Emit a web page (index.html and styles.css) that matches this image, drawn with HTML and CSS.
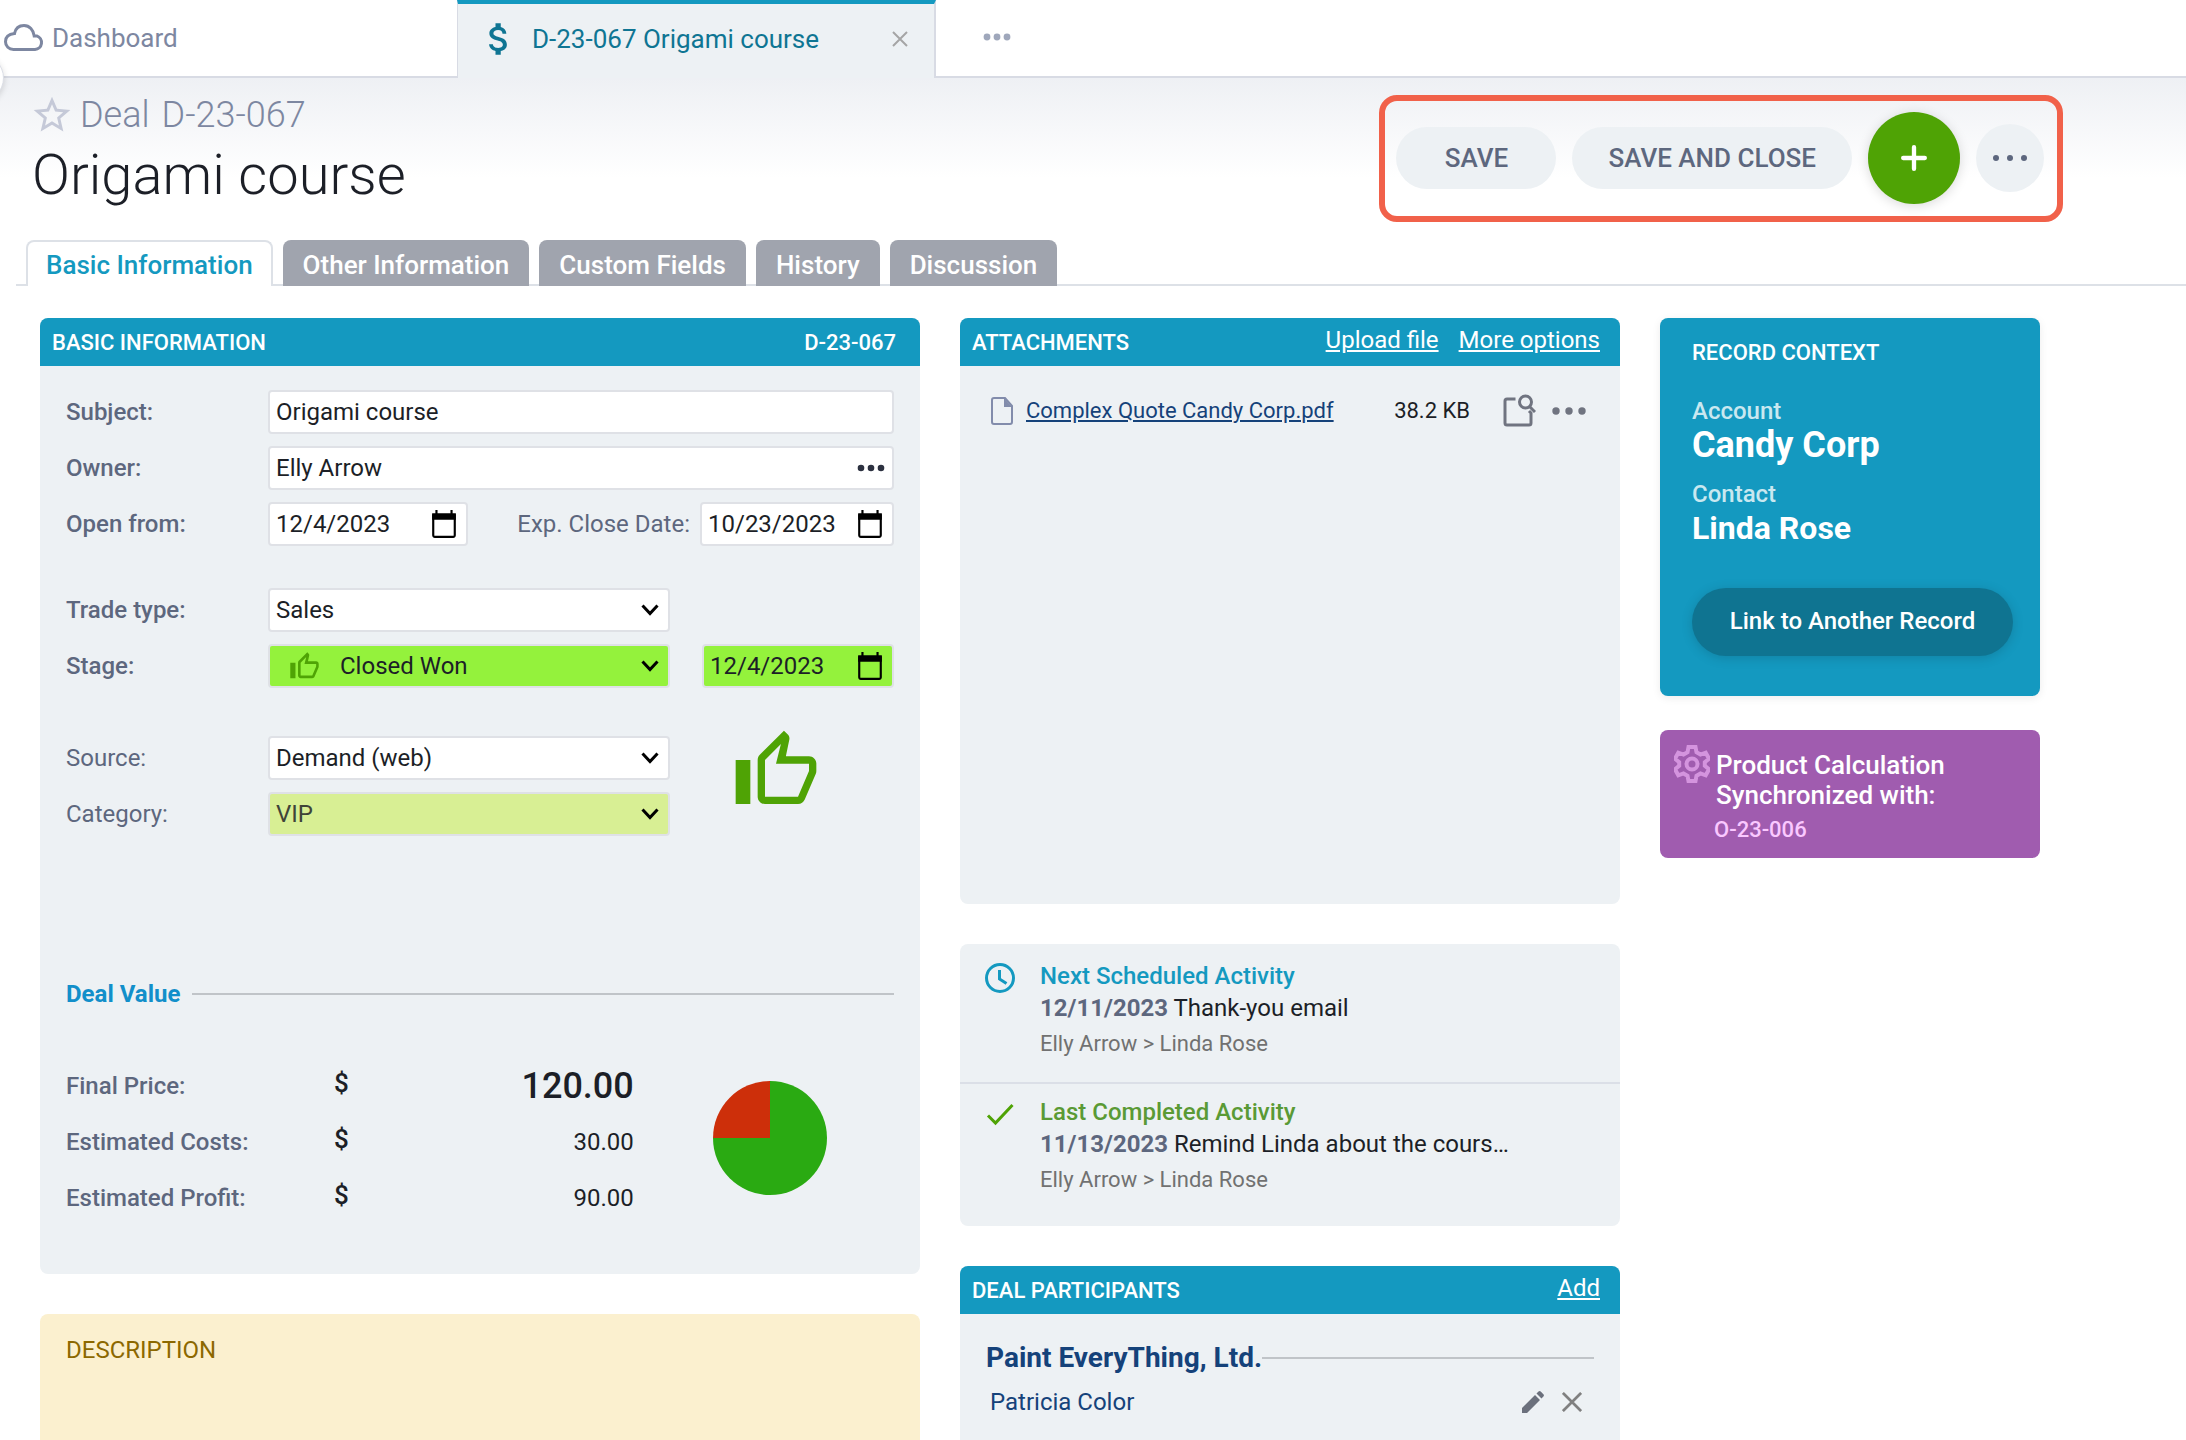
FILE: index.html
```html
<!DOCTYPE html>
<html lang="en">

<head>
    <meta charset="UTF-8">
    <meta name="viewport" content="width=device-width, initial-scale=1.0">
    <title>D-23-067 Origami course</title>
    <link rel="stylesheet" href="styles.css">
</head>

<body>
    <nav class="windowTabs">
        <a class="windowTab home" href="#">
            <svg class="cloud" viewBox="0 0 40 28" aria-hidden="true">
                <path d="M9.500 25.500h21.500a7 7 0 0 0 1.800-13.600h-2.600C29.500 6 25.500 1.500 20 1.500c-5 0-8.500 3.200-9.500 8-5.500.5-9 3.500-9 8.200 0 4.500 3.400 7.800 8 7.800z" />
            </svg>
            Dashboard
        </a>
        <div class="windowTab active">
            <svg class="dollar" viewBox="0 0 24 24" aria-hidden="true">
                <path d="M11.8 10.9c-2.27-.59-3-1.2-3-2.15 0-1.09 1.01-1.85 2.7-1.85 1.78 0 2.44.85 2.5 2.1h2.21c-.07-1.72-1.12-3.3-3.21-3.81V3h-3v2.16c-1.94.42-3.5 1.68-3.5 3.61 0 2.31 1.91 3.46 4.7 4.13 2.5.6 3 1.48 3 2.41 0 .69-.49 1.79-2.7 1.79-2.06 0-2.87-.92-2.98-2.1h-2.2c.12 2.19 1.76 3.42 3.68 3.83V21h3v-2.15c1.95-.37 3.5-1.5 3.5-3.55 0-2.84-2.43-3.81-4.7-4.4z" />
            </svg>
            <a href="#">D-23-067 Origami course</a>
            <button class="iconButton closeTab" aria-label="Close tab">
                <svg viewBox="0 0 16 16"><path d="M1 1l14 14M15 1L1 15" /></svg>
            </button>
        </div>
        <div class="windowTab rest">
            <button class="iconButton moreTabs" aria-label="More tabs">
                <svg viewBox="0 0 28 8"><circle cx="4" cy="4" r="3.4" /><circle cx="14" cy="4" r="3.4" /><circle cx="24" cy="4" r="3.4" /></svg>
            </button>
        </div>
    </nav>
    <div class="sideHandle"></div>

    <header class="recordHeader">
        <div class="recordName">
            <div class="recordType">
                <button class="iconButton star" aria-label="Add to favorites">
                    <svg viewBox="0 0 24 24"><path d="M22 9.24l-7.19-.62L12 2 9.19 8.63 2 9.24l5.46 4.73L5.82 21 12 17.27 18.18 21l-1.63-7.03L22 9.24zM12 15.4l-3.76 2.27 1-4.28-3.32-2.88 4.38-.38L12 6.1l1.71 4.04 4.38.38-3.32 2.88 1 4.28L12 15.4z" /></svg>
                </button>
                <span>Deal</span>
                <span>D-23-067</span>
            </div>
            <h1>Origami course</h1>
        </div>
        <div class="actions">
            <button class="pill">SAVE</button>
            <button class="pill">SAVE AND CLOSE</button>
            <button class="round add" aria-label="Add">
                <svg viewBox="0 0 24 24"><path d="M12 2v20M2 12h20" /></svg>
            </button>
            <button class="round more" aria-label="More actions">
                <svg viewBox="0 0 36 8"><circle cx="4" cy="4" r="3" /><circle cx="18" cy="4" r="3" /><circle cx="32" cy="4" r="3" /></svg>
            </button>
        </div>
    </header>

    <nav class="pageTabs">
        <button class="active">Basic Information</button>
        <button>Other Information</button>
        <button>Custom Fields</button>
        <button>History</button>
        <button>Discussion</button>
    </nav>

    <main class="columns">
        <div class="column">
            <section class="card">
                <div class="cardHeader">
                    <h2>BASIC INFORMATION</h2>
                    <span>D-23-067</span>
                </div>
                <form class="basicForm">
                    <div class="fieldGroup">
                        <div class="row">
                            <label class="required" for="subject">Subject:</label>
                            <input class="field wide" id="subject" type="text" value="Origami course">
                        </div>
                        <div class="row">
                            <label class="required" for="owner">Owner:</label>
                            <div class="field wide withIcon">
                                <input id="owner" type="text" value="Elly Arrow">
                                <button type="button" class="iconButton pick" aria-label="Pick owner">
                                    <svg viewBox="0 0 28 8"><circle cx="4" cy="4" r="3.3" /><circle cx="14" cy="4" r="3.3" /><circle cx="24" cy="4" r="3.3" /></svg>
                                </button>
                            </div>
                        </div>
                        <div class="row">
                            <label class="required" for="openFrom">Open from:</label>
                            <div class="field date withIcon">
                                <input id="openFrom" type="text" value="12/4/2023">
                                <button type="button" class="iconButton calendar" aria-label="Pick date">
                                    <svg viewBox="0 0 24 26"><path d="M2 5h20v18.500a1.500 1.500 0 0 1-1.500 1.500h-17A1.500 1.500 0 0 1 2 23.500z" /><path class="solid" d="M1 3h3V0h2v3h12V0h2v3h3v6H1z" /></svg>
                                </button>
                            </div>
                            <label class="inner" for="closeDate">Exp. Close Date:</label>
                            <div class="field date withIcon">
                                <input id="closeDate" type="text" value="10/23/2023">
                                <button type="button" class="iconButton calendar" aria-label="Pick date">
                                    <svg viewBox="0 0 24 26"><path d="M2 5h20v18.500a1.500 1.500 0 0 1-1.500 1.500h-17A1.500 1.500 0 0 1 2 23.500z" /><path class="solid" d="M1 3h3V0h2v3h12V0h2v3h3v6H1z" /></svg>
                                </button>
                            </div>
                        </div>
                    </div>

                    <div class="fieldGroup">
                        <div class="row">
                            <label class="required" for="tradeType">Trade type:</label>
                            <div class="field select">
                                <select id="tradeType"><option>Sales</option></select>
                                <svg class="chevron" viewBox="0 0 18 12"><path d="M1.500 1.500L9 9.500l7.500-8" /></svg>
                            </div>
                        </div>
                        <div class="row">
                            <label class="required" for="stage">Stage:</label>
                            <div class="field select won">
                                <svg class="thumb" viewBox="0 0 24 24"><path d="M9 21h9c.83 0 1.54-.5 1.84-1.22l3.02-7.05c.09-.23.14-.47.14-.73v-2c0-1.1-.9-2-2-2h-6.31l.95-4.57.03-.32c0-.41-.17-.79-.44-1.06L14.17 1 7.58 7.59C7.22 7.95 7 8.45 7 9v10c0 1.1.9 2 2 2zM9 9l4.34-4.34L12 10h9v2l-3 7H9V9zM1 9h4v12H1z" /></svg>
                                <select id="stage"><option>Closed Won</option></select>
                                <svg class="chevron" viewBox="0 0 18 12"><path d="M1.500 1.500L9 9.500l7.500-8" /></svg>
                            </div>
                            <div class="field date withIcon won">
                                <input aria-label="Stage date" type="text" value="12/4/2023">
                                <button type="button" class="iconButton calendar" aria-label="Pick date">
                                    <svg viewBox="0 0 24 26"><path d="M2 5h20v18.500a1.500 1.500 0 0 1-1.500 1.500h-17A1.500 1.500 0 0 1 2 23.500z" /><path class="solid" d="M1 3h3V0h2v3h12V0h2v3h3v6H1z" /></svg>
                                </button>
                            </div>
                        </div>
                    </div>

                    <div class="sourceGroup">
                        <div class="fieldGroup">
                            <div class="row">
                                <label for="source">Source:</label>
                                <div class="field select">
                                    <select id="source"><option>Demand (web)</option></select>
                                    <svg class="chevron" viewBox="0 0 18 12"><path d="M1.500 1.500L9 9.500l7.500-8" /></svg>
                                </div>
                            </div>
                            <div class="row">
                                <label for="category">Category:</label>
                                <div class="field select vip">
                                    <select id="category"><option>VIP</option></select>
                                    <svg class="chevron" viewBox="0 0 18 12"><path d="M1.500 1.500L9 9.500l7.500-8" /></svg>
                                </div>
                            </div>
                        </div>
                        <svg class="bigThumb" viewBox="0 0 24 24" aria-hidden="true"><path d="M9 21h9c.83 0 1.54-.5 1.84-1.22l3.02-7.05c.09-.23.14-.47.14-.73v-2c0-1.1-.9-2-2-2h-6.31l.95-4.57.03-.32c0-.41-.17-.79-.44-1.06L14.17 1 7.58 7.59C7.22 7.95 7 8.45 7 9v10c0 1.1.9 2 2 2zM9 9l4.34-4.34L12 10h9v2l-3 7H9V9zM1 9h4v12H1z" /></svg>
                    </div>

                    <h3 class="divider">Deal Value</h3>
                    <div class="dealValue">
                        <table>
                            <tr class="final">
                                <th>Final Price:</th>
                                <td class="currency">$</td>
                                <td class="amount">120.00</td>
                            </tr>
                            <tr>
                                <th>Estimated Costs:</th>
                                <td class="currency">$</td>
                                <td class="amount">30.00</td>
                            </tr>
                            <tr>
                                <th>Estimated Profit:</th>
                                <td class="currency">$</td>
                                <td class="amount">90.00</td>
                            </tr>
                        </table>
                        <div class="pie"></div>
                    </div>
                </form>
            </section>

            <section class="description">
                <h2>DESCRIPTION</h2>
            </section>
        </div>

        <div class="column">
            <section class="card">
                <div class="cardHeader">
                    <h2>ATTACHMENTS</h2>
                    <div class="links">
                        <a href="#">Upload file</a>
                        <a href="#">More options</a>
                    </div>
                </div>
                <div class="attachments">
                    <div class="attachment">
                        <svg class="file" viewBox="0 0 22 28" aria-hidden="true"><path d="M3 1h11l7 8v16a2 2 0 0 1-2 2H3a2 2 0 0 1-2-2V3a2 2 0 0 1 2-2z" /><path class="solid" d="M13 1l8 9h-8z" /></svg>
                        <a href="#">Complex Quote Candy Corp.pdf</a>
                        <span class="size">38.2 KB</span>
                        <button class="iconButton preview" aria-label="Preview">
                            <svg viewBox="0 0 34 34"><path d="M13.500 5H5a2 2 0 0 0-2 2v22a2 2 0 0 0 2 2h22a2 2 0 0 0 2-2V19l-2-2" /><circle cx="23.500" cy="8" r="6" /><path d="M27.500 12.500l5.500 5.500" /></svg>
                        </button>
                        <button class="iconButton fileMenu" aria-label="File menu">
                            <svg viewBox="0 0 34 8"><circle cx="4" cy="4" r="3.7" /><circle cx="17" cy="4" r="3.7" /><circle cx="30" cy="4" r="3.7" /></svg>
                        </button>
                    </div>
                </div>
            </section>

            <section class="card">
                <div class="activity next">
                    <svg viewBox="0 0 32 32" aria-hidden="true"><circle cx="16" cy="16" r="13.500" /><path d="M15.500 8v9l7 4.500" /></svg>
                    <div>
                        <h3>Next Scheduled Activity</h3>
                        <p><b>12/11/2023</b> Thank-you email</p>
                        <p class="people">Elly Arrow &gt; Linda Rose</p>
                    </div>
                </div>
                <div class="activity done">
                    <svg viewBox="0 0 32 32" aria-hidden="true"><path d="M4 17.500l7.500 7.500L28.500 7" /></svg>
                    <div>
                        <h3>Last Completed Activity</h3>
                        <p><b>11/13/2023</b> Remind Linda about the cours…</p>
                        <p class="people">Elly Arrow &gt; Linda Rose</p>
                    </div>
                </div>
            </section>

            <section class="card participants">
                <div class="cardHeader">
                    <h2>DEAL PARTICIPANTS</h2>
                    <div class="links">
                        <a href="#">Add</a>
                    </div>
                </div>
                <div class="participantList">
                    <h3 class="company">Paint EveryThing, Ltd.</h3>
                    <div class="person">
                        <a href="#">Patricia Color</a>
                        <button class="iconButton edit" aria-label="Edit">
                            <svg viewBox="0 0 22 22"><path d="M0 22v-5L13 4l5 5L5 22zM14.500 2.500L16.500.6c.7-.7 1.500-.7 2.200 0l2.700 2.700c.7.7.7 1.500 0 2.200L19.500 7.500z" /></svg>
                        </button>
                        <button class="iconButton remove" aria-label="Remove">
                            <svg viewBox="0 0 22 22"><path d="M1 1l20 20M21 1L1 21" /></svg>
                        </button>
                    </div>
                </div>
            </section>
        </div>

        <aside class="column side">
            <section class="context">
                <h2>RECORD CONTEXT</h2>
                <span class="kind">Account</span>
                <a class="account" href="#">Candy Corp</a>
                <span class="kind">Contact</span>
                <a class="contact" href="#">Linda Rose</a>
                <button>Link to Another Record</button>
            </section>
            <section class="sync">
                <svg viewBox="0 0 36 38" aria-hidden="true">
                    <path d="M14.500 2h7l1 5.300 4 2.300 5.200-1.900 3.300 6-4.200 3.500v3.600l4.200 3.500-3.300 6-5.200-1.900-4 2.300-1 5.300h-7l-1-5.300-4-2.300-5.200 1.900-3.300-6 4.200-3.500v-3.600L1 13.700l3.300-6 5.200 1.900 4-2.300z" />
                    <circle cx="18" cy="19" r="5.500" />
                </svg>
                <div>
                    <h2>Product Calculation Synchronized with:</h2>
                    <a href="#">O-23-006</a>
                </div>
            </section>
        </aside>
    </main>
</body>

</html>
```

FILE: styles.css
```css
* {
    box-sizing: border-box;
}

body {
    display: flex;
    flex-direction: column;
    margin: 0;
    min-height: 100vh;
    font-family: Roboto, "Liberation Sans", sans-serif;
    font-size: 24px;
    line-height: 28px;
    color: #1c1f27;
    background-color: white;
    overflow-x: hidden;
}

h1, h2, h3, p {
    margin: 0;
}

button, input, select {
    font: inherit;
    color: inherit;
}

button {
    border: none;
    padding: 0;
    cursor: pointer;
}

svg {
    display: block;
    flex: none;
}

.iconButton {
    display: flex;
    align-items: center;
    background: none;
}

/* open windows */

.windowTabs {
    display: flex;
    height: 78px;
    font-size: 26px;
    color: #7d87a1;
}

.windowTab {
    display: flex;
    align-items: center;
    border-bottom: 2px solid #d8dbe4;
}

.windowTabs a {
    color: inherit;
    text-decoration: none;
}

.home {
    flex: 0 0 457px;
    gap: 8px;
    padding-left: 4px;
}

.cloud {
    width: 40px;
    height: 28px;
    fill: none;
    stroke: #7d87a1;
    stroke-width: 3;
}

.windowTab.active {
    flex: 0 0 479px;
    padding: 0 26px 5px 20px;
    color: #0f7593;
    background-color: #edf1f4;
    border: 1px solid #d8dbe4;
    border-right-width: 2px;
    border-top: 4px solid #1499c0;
    border-bottom: none;
}

.dollar {
    width: 42px;
    height: 42px;
    margin-right: 12px;
    fill: #0f7593;
}

.closeTab {
    margin-left: auto;
}

.closeTab svg {
    width: 16px;
    height: 16px;
    stroke: #a5a5a5;
    stroke-width: 2;
}

.rest {
    flex: 1;
    padding: 0 0 2px 47px;
}

.moreTabs svg {
    width: 28px;
    height: 8px;
    fill: #9fa7bb;
}

/* edge of the collapsed side panel */
.sideHandle {
    position: absolute;
    top: 54px;
    left: -44px;
    width: 48px;
    height: 48px;
    border: 1px solid #dcdfe7;
    border-radius: 50%;
    background-color: white;
    box-shadow: 0 2px 6px rgba(0, 0, 0, 0.15);
}

/* record header */

.recordHeader {
    display: flex;
    justify-content: space-between;
    align-items: flex-start;
    padding: 17px 123px 0 32px;
    height: 162px;
    background: linear-gradient(#eef0f4, #ffffff 100px);
}

.recordName {
    margin-top: -2px;
}

.recordType {
    display: flex;
    align-items: center;
    gap: 12px;
    font-size: 36px;
    line-height: 40px;
    font-weight: 300;
    color: #7d87a1;
}

.star {
    margin: 0 -6px 0 -2px;
}

.star svg {
    width: 44px;
    height: 44px;
    fill: #c5c9d8;
}

h1 {
    margin-top: 6px;
    font-size: 56px;
    line-height: 64px;
    font-weight: 300;
}

.actions {
    display: flex;
    align-items: center;
    gap: 16px;
    padding: 11px 13px 12px 11px;
    border: 6px solid #f1614a;
    border-radius: 18px;
}

.pill {
    height: 62px;
    padding: 0 36px;
    min-width: 160px;
    border-radius: 31px;
    font-size: 26px;
    font-weight: 500;
    color: #5d677e;
    background-color: #edf1f4;
}

.round {
    display: flex;
    justify-content: center;
    align-items: center;
    border-radius: 50%;
}

.add {
    width: 92px;
    height: 92px;
    background-color: #4fa305;
    box-shadow: 0 2px 12px rgba(0, 0, 0, 0.15);
}

.add svg {
    width: 26px;
    height: 26px;
    stroke: white;
    stroke-width: 4;
    stroke-linecap: round;
}

.more {
    width: 68px;
    height: 68px;
    background-color: #edf1f4;
}

.more svg {
    width: 36px;
    height: 8px;
    fill: #5d677e;
}

/* page tabs */

.pageTabs {
    display: flex;
    gap: 10px;
    margin-left: 16px;
    padding-left: 10px;
    box-shadow: inset 0 -2px #dde1e7;
}

.pageTabs button {
    height: 46px;
    padding: 4px 20px 0;
    border-radius: 8px 8px 0 0;
    font-size: 26px;
    font-weight: 500;
    color: white;
    background-color: #a0a4ae;
}

.pageTabs .active {
    padding: 2px 18px 0;
    border: 2px solid #dde1e7;
    border-bottom: none;
    color: #1499c0;
    background-color: white;
}

/* columns */

.columns {
    flex: 1;
    display: grid;
    grid-template-columns: 44fr 33fr 19fr;
    gap: 40px;
    padding: 32px 146px 0 40px;
}

.column {
    display: flex;
    flex-direction: column;
    gap: 40px;
    min-width: 0;
}

.column.side {
    gap: 34px;
}

.card {
    border-radius: 8px;
    background-color: #edf1f4;
    overflow: hidden;
}

.cardHeader {
    display: flex;
    justify-content: space-between;
    align-items: center;
    height: 48px;
    padding: 2px 20px 0 12px;
    font-size: 22px;
    font-weight: 500;
    color: white;
    background-color: #1499c0;
}

.column:first-child .cardHeader {
    padding-right: 24px;
}

h2 {
    font-size: 22px;
    font-weight: 500;
}

.links {
    display: flex;
    gap: 20px;
    padding-bottom: 6px;
    font-size: 24px;
    font-weight: 400;
}

.links a {
    color: white;
}

/* basic information */

.basicForm {
    padding: 24px 26px 48px;
}

.fieldGroup {
    display: flex;
    flex-direction: column;
    gap: 12px;
    margin-bottom: 42px;
}

.fieldGroup + .fieldGroup {
    margin-bottom: 48px;
}

.row {
    display: flex;
    align-items: center;
    justify-content: space-between;
}

.row > label:first-child {
    width: 202px;
    flex: none;
}

label {
    color: #5d677e;
}

.required {
    font-weight: 500;
}

.inner {
    margin-left: auto;
    margin-right: 10px;
}

.field {
    height: 44px;
    border: 2px solid #dfe1e6;
    border-radius: 4px;
    background-color: white;
}

input {
    min-width: 0;
    padding: 0 6px;
}

.wide {
    flex: 1;
}

.withIcon {
    display: flex;
    align-items: center;
    padding-right: 9px;
}

.field input,
.field select {
    flex: 1;
    width: 100%;
    height: 100%;
    border: none;
    background: none;
    outline: none;
}

.date {
    width: 200px;
}

.inner + .date {
    width: 194px;
}

.select + .date {
    width: 192px;
}

.pick svg {
    width: 28px;
    height: 8px;
    margin-right: -2px;
    fill: #2c3140;
}

.calendar svg {
    width: 26px;
    height: 28px;
    fill: none;
    stroke: black;
    stroke-width: 2;
}

.calendar .solid {
    fill: black;
    stroke: none;
}

.select {
    display: flex;
    align-items: center;
    width: 402px;
    padding-right: 9px;
}

.row > .select {
    margin-right: auto;
}

.select select {
    appearance: none;
    padding: 0 6px;
}

.chevron {
    width: 18px;
    height: 12px;
    fill: none;
    stroke: black;
    stroke-width: 3;
}

.won {
    background-color: #94f23c;
}

.vip {
    background-color: #d8ef94;
    color: #3f4438;
}

.thumb {
    width: 31px;
    height: 31px;
    margin: 0 14px 0 19px;
    fill: #4fa305;
}

.sourceGroup {
    display: flex;
    align-items: flex-start;
    gap: 62px;
}

.bigThumb {
    width: 88px;
    height: 88px;
    margin-top: -9px;
    fill: #4fa305;
}

.divider {
    display: flex;
    align-items: center;
    gap: 12px;
    margin-top: 102px;
    font-size: 24px;
    font-weight: 700;
    color: #128fca;
}

.divider::after,
.company::after {
    content: "";
    flex: 1;
    height: 2px;
    background-color: #c0c4c8;
}

.dealValue {
    display: flex;
    align-items: flex-start;
    gap: 79px;
    margin-top: 50px;
}

table {
    border-collapse: collapse;
}

tr {
    height: 56px;
}

th, td {
    padding: 0;
}

th {
    width: 268px;
    text-align: left;
    font-weight: 500;
    color: #5d677e;
}

.currency {
    padding-bottom: 6px;
    font-size: 26px;
    font-weight: 500;
}

.amount {
    width: 285px;
    text-align: right;
}

.final .amount {
    font-size: 36px;
    font-weight: 500;
}

.pie {
    width: 114px;
    height: 114px;
    margin-top: 23px;
    border-radius: 50%;
    background: conic-gradient(#2aaa12 75%, #cd2f0a 0);
}

.description {
    flex: 1;
    padding: 22px 26px;
    border-radius: 8px 8px 0 0;
    background-color: #fbf0cf;
}

.description h2 {
    font-size: 24px;
    font-weight: 400;
    color: #8c6800;
}

/* attachments */

.attachments {
    height: 538px;
    padding: 28px 32px 28px 31px;
}

.attachment {
    display: flex;
    align-items: center;
    font-size: 22px;
}

.attachment a {
    color: #15427a;
}

.file {
    width: 22px;
    height: 28px;
    margin-right: 13px;
    fill: none;
    stroke: #828cab;
    stroke-width: 2;
}

.file .solid {
    fill: #828cab;
    stroke: none;
}

.size {
    margin-left: auto;
    margin-right: 32px;
}

.preview svg {
    width: 34px;
    height: 34px;
    fill: none;
    stroke: #707480;
    stroke-width: 3;
}

.fileMenu {
    margin: 0 2px 0 16px;
}

.fileMenu svg {
    width: 34px;
    height: 8px;
    fill: #707480;
}

/* activities */

.activity {
    display: flex;
    gap: 24px;
    padding: 18px 24px 24px;
}

.activity + .activity {
    padding-top: 14px;
    padding-bottom: 32px;
    border-top: 2px solid #dbdfe7;
}

.activity svg {
    width: 32px;
    height: 32px;
    fill: none;
    stroke: #1499c0;
    stroke-width: 3;
}

.activity.done svg {
    stroke: #4fa305;
}

.activity h3 {
    font-size: 24px;
    font-weight: 500;
    color: #1499c0;
}

.activity.done h3 {
    color: #5a9a35;
}

.activity p {
    margin-top: 4px;
}

.activity b {
    color: #5d677e;
}

.activity .people {
    margin-top: 8px;
    font-size: 22px;
    color: #717171;
}

/* participants */

.participants {
    flex: 1;
    border-radius: 8px 8px 0 0;
}

.participantList {
    padding: 27px 26px 20px;
}

.company {
    display: flex;
    align-items: center;
    font-size: 28px;
    line-height: 34px;
    font-weight: 700;
    color: #15427a;
}

.person {
    display: flex;
    align-items: center;
    gap: 18px;
    margin-top: 13px;
    padding: 0 12px 0 4px;
}

.person a {
    margin-right: auto;
    color: #15427a;
    text-decoration: none;
}

.edit svg {
    width: 22px;
    height: 22px;
    fill: #6b707c;
}

.remove svg {
    width: 20px;
    height: 20px;
    stroke: #808080;
    stroke-width: 3;
}

/* right side */

.context,
.sync {
    border-radius: 8px;
    color: white;
}

.context {
    display: flex;
    flex-direction: column;
    padding: 21px 27px 40px 32px;
    background-color: #1499c0;
    box-shadow: 0 2px 8px rgba(0, 0, 0, 0.08);
}

.context a {
    font-weight: 700;
    color: white;
    text-decoration: none;
}

.context h2 {
    margin-bottom: 30px;
}

.kind {
    font-weight: 500;
    color: #c9e8f0;
}

.context .account {
    margin-bottom: 14px;
    font-size: 36px;
    line-height: 41px;
}

.context .contact {
    font-size: 32px;
    line-height: 40px;
}

.context button {
    height: 68px;
    margin-top: 40px;
    padding-bottom: 2px;
    border-radius: 34px;
    font-weight: 500;
    color: white;
    background-color: #0f7491;
    box-shadow: 0 2px 12px rgba(0, 0, 0, 0.15);
}

.sync {
    display: flex;
    gap: 4px;
    padding: 15px 14px 14px;
    background-color: #a05caf;
}

.sync svg {
    width: 36px;
    height: 38px;
    fill: none;
    stroke: #d494de;
    stroke-width: 4;
}

.sync h2 {
    margin-top: 5px;
    padding-left: 2px;
    font-size: 26px;
    line-height: 30px;
}

.sync a {
    display: block;
    margin-top: 6px;
    font-size: 22px;
    font-weight: 500;
    color: #fac8ff;
    text-decoration: none;
}
```
